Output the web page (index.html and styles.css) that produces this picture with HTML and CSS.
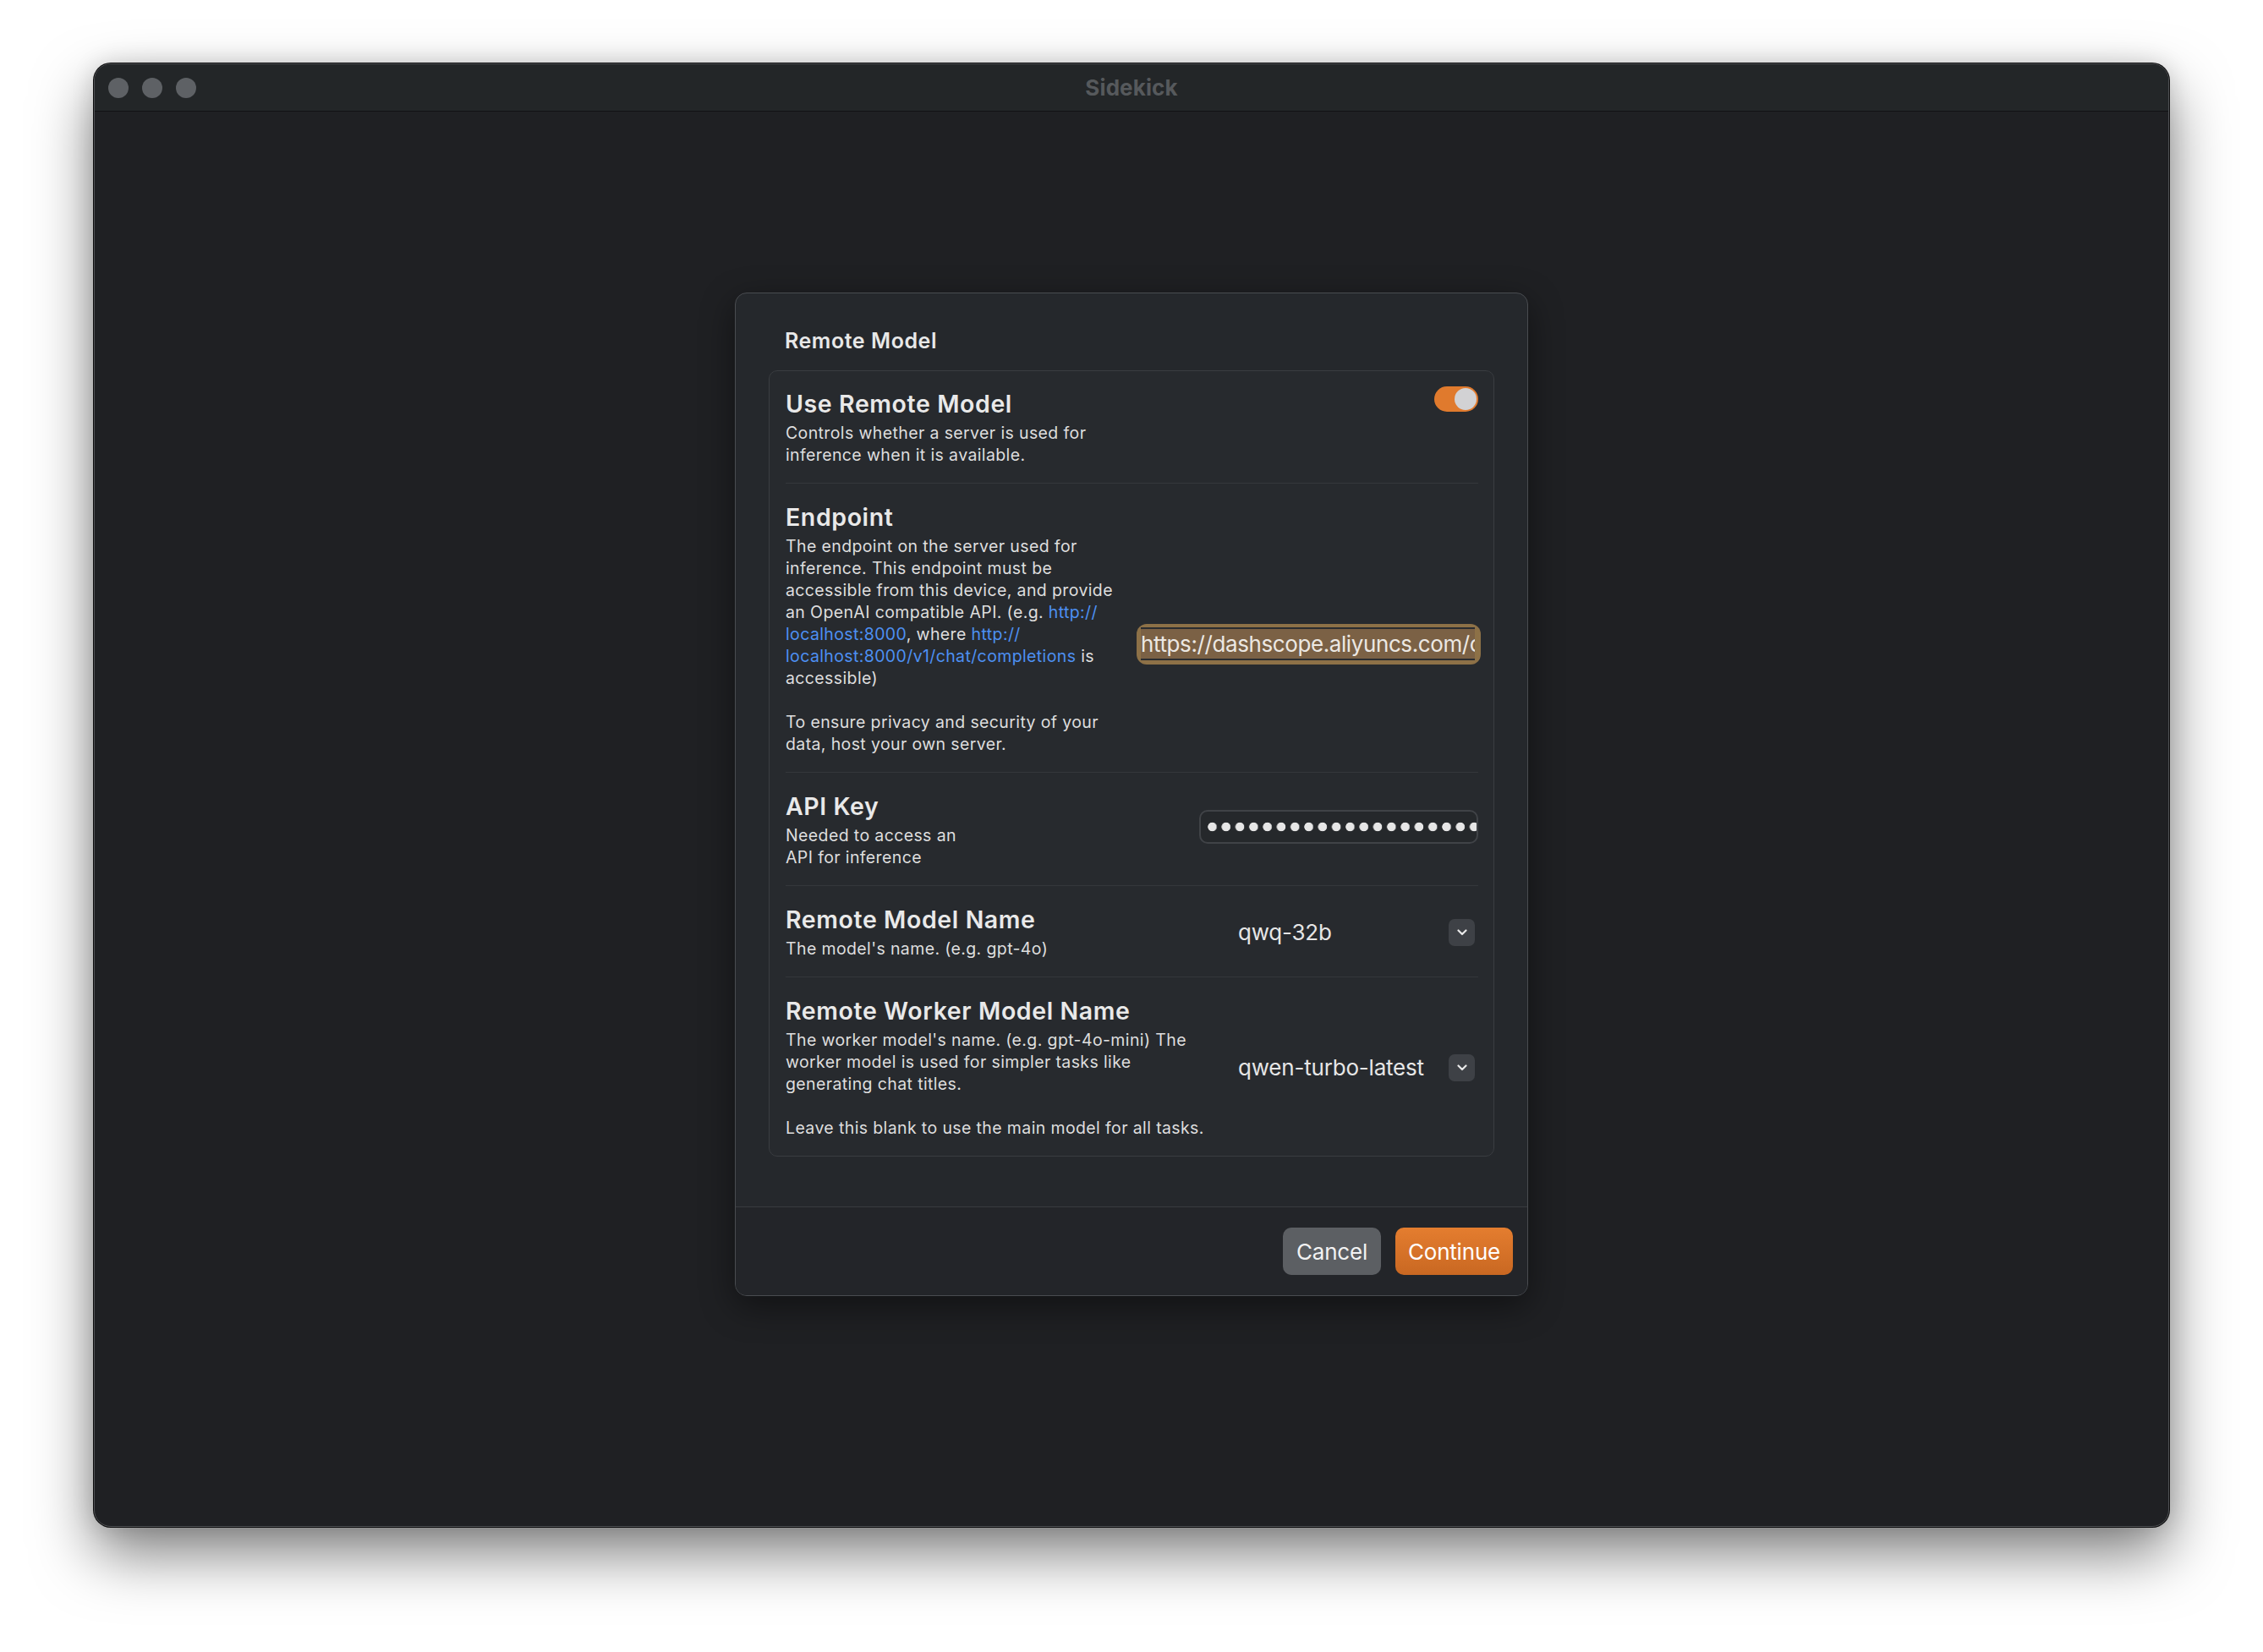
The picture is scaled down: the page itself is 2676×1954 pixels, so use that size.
FILE: index.html
```html
<!DOCTYPE html>
<html lang="en">
<head>
<meta charset="utf-8">
<title>Sidekick</title>
<link rel="stylesheet" href="styles.css">
</head>
<body>
<div class="window">
  <header class="titlebar">
    <div class="lights">
      <span class="light"></span>
      <span class="light"></span>
      <span class="light"></span>
    </div>
    <div class="window-title">Sidekick</div>
    <div class="titlebar-spacer"></div>
  </header>
  <main class="content">
    <section class="dialog">
      <div class="dialog-body">
        <h2 class="dialog-heading">Remote Model</h2>
        <div class="card">
          <div class="row row-first row-top">
            <div class="row-text">
              <div class="row-title">Use Remote Model</div>
              <div class="row-desc">Controls whether a server is used for<br>inference when it is available.</div>
            </div>
            <div class="toggle"><span class="knob"></span></div>
          </div>

          <div class="row row-stack">
            <div class="row-title">Endpoint</div>
            <div class="row-inner">
              <div class="row-desc">The endpoint on the server used for<br>inference. This endpoint must be<br>accessible from this device, and provide<br>an OpenAI compatible API. (e.g. <a class="link">http://<br>localhost:8000</a>, where <a class="link">http://<br>localhost:8000/v1/chat/completions</a> is<br>accessible)<br><br>To ensure privacy and security of your<br>data, host your own server.</div>
              <div class="url-field"><div class="url-sel">https://dashscope.aliyuncs.com/compatible-mode/v1</div></div>
            </div>
          </div>

          <div class="row">
            <div class="row-text">
              <div class="row-title">API Key</div>
              <div class="row-desc">Needed to access an<br>API for inference</div>
            </div>
            <div class="key-field" aria-label="API key (hidden)"><div class="key-dots"></div></div>
          </div>

          <div class="row">
            <div class="row-text">
              <div class="row-title">Remote Model Name</div>
              <div class="row-desc">The model's name. (e.g. gpt-4o)</div>
            </div>
            <div class="picker">
              <span class="picker-value">qwq-32b</span>
              <span class="picker-btn"><svg width="12" height="8" viewBox="0 0 12 8"><path d="M1.5 1.5 L6 6 L10.5 1.5" fill="none" stroke="#e8e8e8" stroke-width="2.2" stroke-linecap="round" stroke-linejoin="round"/></svg></span>
            </div>
          </div>

          <div class="row">
            <div class="row-text">
              <div class="row-title">Remote Worker Model Name</div>
              <div class="row-desc">The worker model's name. (e.g. gpt-4o-mini) The<br>worker model is used for simpler tasks like<br>generating chat titles.<br><br>Leave this blank to use the main model for all tasks.</div>
            </div>
            <div class="picker">
              <span class="picker-value">qwen-turbo-latest</span>
              <span class="picker-btn"><svg width="12" height="8" viewBox="0 0 12 8"><path d="M1.5 1.5 L6 6 L10.5 1.5" fill="none" stroke="#e8e8e8" stroke-width="2.2" stroke-linecap="round" stroke-linejoin="round"/></svg></span>
            </div>
          </div>
        </div>
      </div>
      <footer class="dialog-footer">
        <button class="btn btn-cancel">Cancel</button>
        <button class="btn btn-continue">Continue</button>
      </footer>
    </section>
  </main>
</div>
</body>
</html>
```

FILE: styles.css
```css
* { box-sizing: border-box; }

html, body {
  margin: 0;
  padding: 0;
}

body {
  background: #ffffff;
  font-family: Inter, "Noto Sans", "Liberation Sans", sans-serif;
  color: #e6e6e6;
  width: 2676px;
  height: 1954px;
  overflow: hidden;
  padding-top: 75px;
  padding-left: 111px;
}

.window {
  width: 2454px;
  height: 1731px;
  border: 1px solid #4e5053;
  border-radius: 20px;
  overflow: hidden;
  background: #1f2023;
  box-shadow: 0 0 0 1px #0c0c0d, 0 32px 70px rgba(0, 0, 0, 0.5), 0 0 28px rgba(0, 0, 0, 0.14);
  display: flex;
  flex-direction: column;
}

.titlebar {
  height: 56px;
  flex: none;
  background: #232628;
  border-bottom: 1px solid #111214;
  display: grid;
  grid-template-columns: 1fr auto 1fr;
  align-items: center;
}

.lights {
  display: flex;
  gap: 16px;
  padding-left: 16px;
}

.light {
  width: 24px;
  height: 24px;
  border-radius: 50%;
  background: #5e6165;
}

.window-title {
  font-size: 26px;
  font-weight: 700;
  color: #56595c;
  letter-spacing: 0.1px;
}

.content {
  flex: 1;
  display: flex;
  flex-direction: column;
  align-items: center;
  padding-top: 214px;
}

.dialog {
  width: 938px;
  border: 1px solid #494c50;
  border-radius: 14px;
  background: #25282c;
  overflow: hidden;
  box-shadow: 0 12px 40px rgba(0, 0, 0, 0.45);
}

.dialog-body {
  padding: 41px 39px 59px;
}

.dialog-heading {
  margin: 0 0 20px;
  padding-left: 19px;
  font-size: 25px;
  line-height: 30px;
  font-weight: 600;
  color: #e8e8e8;
  letter-spacing: 0.55px;
}

.card {
  border: 1px solid #3a3d41;
  border-radius: 10px;
  background: #272a2e;
  padding: 0 18px 0 19px;
}

.row {
  display: flex;
  align-items: center;
  gap: 20px;
  padding: 23px 0 20px;
  border-top: 1px solid #34373b;
}

.row-first {
  border-top: none;
  padding-top: 22px;
}

.row-top {
  align-items: flex-start;
}

.row-stack {
  display: block;
}

.row-inner {
  display: flex;
  align-items: center;
  justify-content: space-between;
  margin-top: 4px;
}

.row-text {
  flex: 1;
}

.row-title {
  font-size: 28.5px;
  line-height: 34px;
  font-weight: 600;
  color: #e9e9e9;
  letter-spacing: 0.6px;
  white-space: nowrap;
}

.row-desc {
  margin-top: 4px;
  font-size: 19.5px;
  line-height: 26px;
  color: #dedede;
  white-space: nowrap;
  letter-spacing: 0.38px;
}

.row-inner .row-desc {
  margin-top: 0;
}

.link {
  color: #4d90f2;
}

.toggle {
  width: 52px;
  height: 30px;
  margin-top: -4px;
  border-radius: 15px;
  background: #e07a2d;
  display: flex;
  justify-content: flex-end;
  align-items: center;
  padding: 2px;
}

.knob {
  width: 26px;
  height: 26px;
  border-radius: 50%;
  background: #d2d2d4;
}

.url-field {
  width: 407px;
  height: 48px;
  margin-right: -3px;
  margin-top: -2px;
  border-radius: 12px;
  background: #8d7147;
  padding: 4px 7px 5px 5px;
}

.url-sel {
  height: 39px;
  border-top: 2px solid #2b2d30;
  border-bottom: 2px solid #2b2d30;
  background: #7b6145;
  overflow: hidden;
  white-space: nowrap;
  font-size: 26px;
  line-height: 35px;
  color: #ece8e3;
  letter-spacing: -0.4px;
}

.key-field {
  width: 330px;
  height: 40px;
  margin-top: -8px;
  border: 2px solid #404347;
  border-radius: 10px;
  background: #25282b;
  padding: 0 0 0 8px;
  overflow: hidden;
}

.key-dots {
  height: 100%;
  background-image: radial-gradient(circle at 5.5px 50%, #e6e6e6 0, #e6e6e6 4.9px, rgba(230, 230, 230, 0) 5.6px);
  background-size: 16.3px 100%;
  background-repeat: repeat-x;
}

.picker {
  width: 284px;
  display: flex;
  align-items: center;
  justify-content: space-between;
  padding-right: 4px;
}

.picker-value {
  font-size: 26px;
  line-height: 32px;
  color: #e6e6e6;
  letter-spacing: -0.2px;
  white-space: nowrap;
}

.picker-btn {
  width: 31px;
  height: 32px;
  border-radius: 7px;
  background: #3e4146;
  display: flex;
  align-items: center;
  justify-content: center;
}

.dialog-footer {
  border-top: 1px solid #393c40;
  background: #232529;
  padding: 24px 17px;
  display: flex;
  justify-content: flex-end;
  gap: 17px;
}

.btn {
  height: 56px;
  border: none;
  border-radius: 10px;
  font-family: Inter, "Noto Sans", "Liberation Sans", sans-serif;
  font-size: 26px;
  color: #f2f2f2;
  padding: 0 12px;
  letter-spacing: -0.2px;
}

.btn-cancel {
  width: 116px;
  background: #5c5f63;
}

.btn-continue {
  width: 139px;
  background: linear-gradient(#e47d2f, #c96822);
  color: #ffffff;
}
```
